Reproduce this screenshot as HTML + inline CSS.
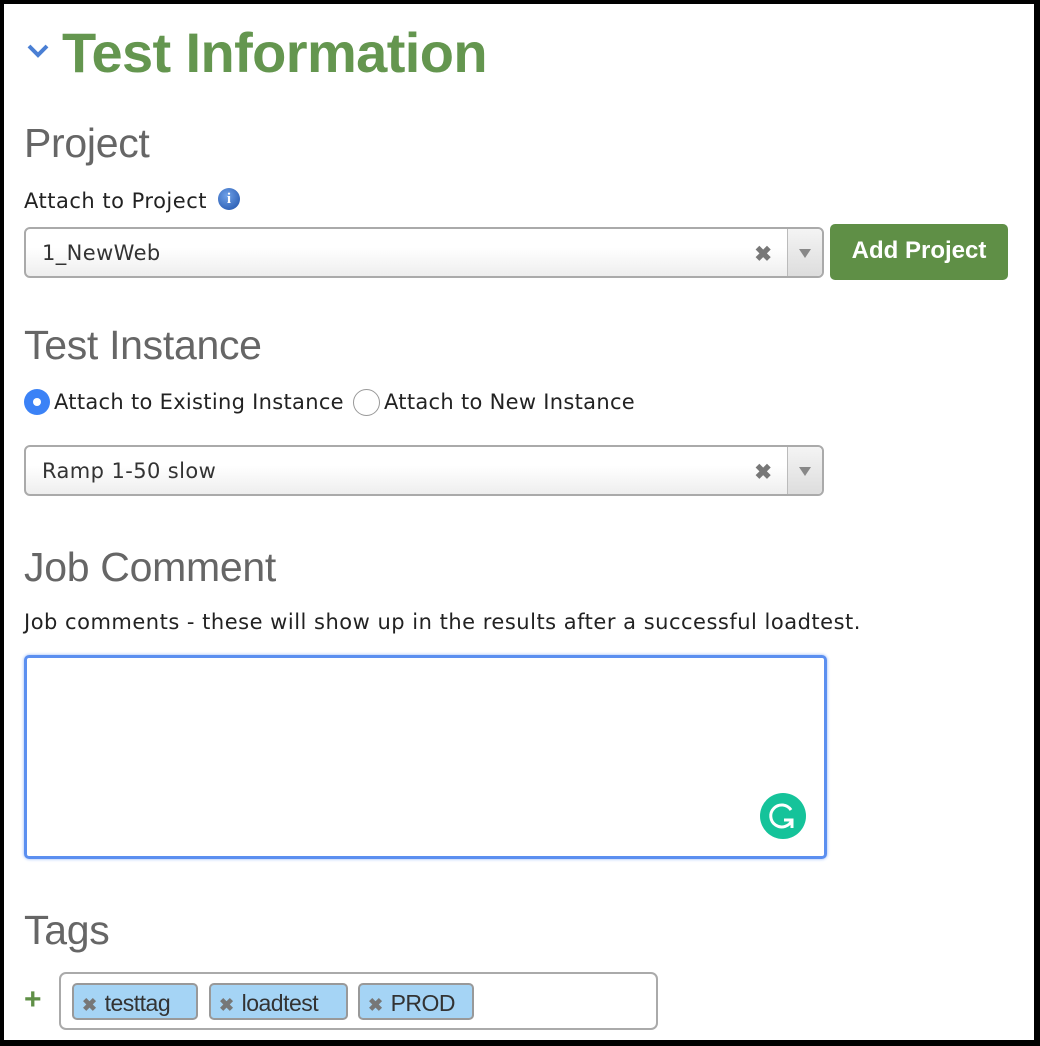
<!DOCTYPE html>
<html><head><style>
*{margin:0;padding:0;box-sizing:border-box}
html,body{width:1040px;height:1046px;background:#000;overflow:hidden}
.page{position:absolute;left:4px;top:4px;width:1030px;height:1036px;background:#fff;font-family:"Liberation Sans",sans-serif}
.abs{position:absolute}
h1{position:absolute;left:58px;top:16px;font-size:56px;font-weight:bold;color:#64964f;letter-spacing:-0.6px;white-space:nowrap}
.h2{position:absolute;left:20px;font-size:41px;color:#666;white-space:nowrap;letter-spacing:-0.3px}
.lbl{position:absolute;font-size:21px;color:#222;white-space:nowrap;font-family:"DejaVu Sans",sans-serif;letter-spacing:0.5px}
.sel{position:absolute;left:20px;width:800px;height:51px;border:2px solid #aaa;border-radius:6px;background:linear-gradient(#fff 40%,#eee)}
.sel .t{position:absolute;left:16px;top:12px;font-size:21px;color:#333;font-family:"DejaVu Sans",sans-serif;letter-spacing:0.4px}
.sel .x{position:absolute;right:50px;top:13px;font-size:21px;color:#777;font-weight:bold}
.sel .d{position:absolute;right:0;top:0;width:35px;height:100%;border-left:1px solid #bbb;background:linear-gradient(#f4f4f4,#ddd);border-radius:0 5px 5px 0}
.sel .d:after{content:"";position:absolute;left:11px;top:20px;border-left:6px solid transparent;border-right:6px solid transparent;border-top:9px solid #888}
.tag{position:absolute;top:979px;height:37px;background:#a5d4f5;border:2px solid #999;border-radius:5px;font-size:23px;color:#333;padding:5px 0 0 8px;white-space:nowrap;letter-spacing:-0.5px}
.tag b{color:#777;font-size:18px;margin-right:8px}
</style></head><body><div class="page">
<svg class="abs" style="left:22px;top:38px" width="26" height="18"><path d="M3 4 L12 13 L21 4" stroke="#4a7fd4" stroke-width="4" fill="none"/></svg>
<h1>Test Information</h1>
<div class="h2" style="top:116px">Project</div>
<div class="lbl" style="left:20px;top:185px">Attach to Project</div>
<div class="abs" style="left:214px;top:184px;width:22px;height:22px;border-radius:50%;background:radial-gradient(circle at 40% 35%,#6fa1e8,#1c4fa8);color:#fff;font:bold 15px 'Liberation Serif',serif;text-align:center;line-height:22px">i</div>
<div class="sel" style="top:223px"><div class="t">1_NewWeb</div><div class="x">✖</div><div class="d"></div></div>
<div class="abs" style="left:826px;top:220px;width:178px;height:56px;background:#5f8f46;border-radius:5px;color:#fff;font-weight:bold;font-size:24px;text-align:center;line-height:54px">Add Project</div>
<div class="h2" style="top:318px">Test Instance</div>
<div class="abs" style="left:20px;top:385px;width:26px;height:26px;border-radius:50%;background:#3b82f6"><div style="position:absolute;left:9px;top:9px;width:8px;height:8px;border-radius:50%;background:#fff"></div></div>
<div class="lbl" style="left:50px;top:386px;letter-spacing:0.3px">Attach to Existing Instance</div>
<div class="abs" style="left:349px;top:385px;width:27px;height:27px;border-radius:50%;border:1px solid #999;background:#fff"></div>
<div class="lbl" style="left:380px;top:386px;letter-spacing:0.3px">Attach to New Instance</div>
<div class="sel" style="top:441px"><div class="t">Ramp 1-50 slow</div><div class="x">✖</div><div class="d"></div></div>
<div class="h2" style="top:540px">Job Comment</div>
<div class="lbl" style="left:20px;top:606px">Job comments - these will show up in the results after a successful loadtest.</div>
<div class="abs" style="left:20px;top:651px;width:803px;height:204px;border:3px solid #5b8ff0;border-radius:5px;box-shadow:0 0 3px #8fb4f7"></div>
<div class="abs" style="left:756px;top:789px;width:46px;height:46px;border-radius:50%;background:#15c39a"><svg width="46" height="46"><path d="M31 17 A11 11 0 1 0 32 27" stroke="#fff" stroke-width="3" fill="none"/><path d="M24 27 L32 27 L32 35" stroke="#fff" stroke-width="3" fill="none"/></svg></div>
<div class="h2" style="top:903px">Tags</div>
<div class="abs" style="left:20px;top:979px;font-size:30px;font-weight:bold;color:#5f8f46">+</div>
<div class="abs" style="left:55px;top:968px;width:599px;height:58px;border:2px solid #aaa;border-radius:7px"></div>
<div class="tag" style="left:68px;width:126px"><b>✖</b>testtag</div>
<div class="tag" style="left:205px;width:139px"><b>✖</b>loadtest</div>
<div class="tag" style="left:354px;width:116px"><b>✖</b>PROD</div>
</div></body></html>
